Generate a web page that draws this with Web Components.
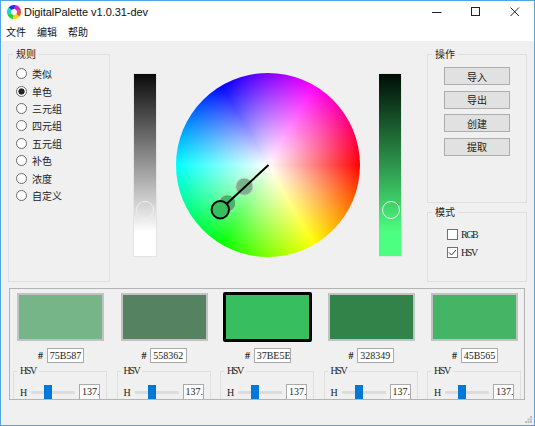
<!DOCTYPE html>
<html lang="zh">
<head>
<meta charset="utf-8">
<title>DigitalPalette</title>
<style>
  html, body { margin: 0; height: 100%; background: #f0f0f0; }
  body { font: 10px "Noto Sans CJK SC", "Noto Sans", sans-serif; color: #222; }
</style>
</head>
<body>
<dp-window>
  <dp-rules slot="left"></dp-rules>
  <dp-stage slot="mid"></dp-stage>
  <dp-side slot="right"></dp-side>
  <dp-palette slot="bottom"></dp-palette>
</dp-window>

<script>
const CJK = '"Noto Sans CJK SC", "Noto Sans", sans-serif';
const LATIN = '"Liberation Serif", "Noto Sans CJK SC", serif';

class DpWindow extends HTMLElement {
  constructor() {
    super();
    this.attachShadow({ mode: 'open' });
    this.shadowRoot.innerHTML = `
      <style>
        :host {
          display: flex;
          flex-direction: column;
          position: relative;
          box-sizing: border-box;
          width: 535px;
          height: 426px;
          border: 1px solid #4fa6e3;
          background: #f0f0f0;
        }
        #title {
          display: flex;
          align-items: center;
          height: 21px;
          background: #fff;
          font: 11px "Liberation Sans", sans-serif;
          letter-spacing: -.05px;
          color: #111;
        }
        #title svg.logo { margin: 0 3px 0 6px; flex: none; }
        #title span { flex: 1; }
        .ctl { width: 39px; height: 21px; display: flex; align-items: center; justify-content: center; }
        #menu {
          display: flex;
          gap: 11px;
          height: 19px;
          padding-left: 5px;
          align-items: center;
          background: #fff;
          font: 10px ${CJK};
          color: #111;
        }
        #top {
          display: grid;
          grid-template-columns: 102px 317px 100px;
          height: 236px;
          padding: 5px 0 0 7px;
        }
        #bottom {
          padding: 6px 0 0 8px;
        }
        #grip {
          position: absolute;
          right: 1px;
          bottom: 1px;
        }
      </style>
      <div id="title">
        <svg class="logo" width="14" height="14" viewBox="0 0 14 14">
          <circle cx="7" cy="7" r="5" fill="none" stroke="#e53" stroke-width="4" stroke-dasharray="5.2 26" transform="rotate(-20 7 7)"/>
          <circle cx="7" cy="7" r="5" fill="none" stroke="#f4d90f" stroke-width="4" stroke-dasharray="5.2 26" transform="rotate(40 7 7)"/>
          <circle cx="7" cy="7" r="5" fill="none" stroke="#2bd62b" stroke-width="4" stroke-dasharray="5.2 26" transform="rotate(100 7 7)"/>
          <circle cx="7" cy="7" r="5" fill="none" stroke="#16d5d5" stroke-width="4" stroke-dasharray="5.2 26" transform="rotate(160 7 7)"/>
          <circle cx="7" cy="7" r="5" fill="none" stroke="#2230e0" stroke-width="4" stroke-dasharray="5.2 26" transform="rotate(220 7 7)"/>
          <circle cx="7" cy="7" r="5" fill="none" stroke="#d41fd4" stroke-width="4" stroke-dasharray="5.2 26" transform="rotate(280 7 7)"/>
        </svg>
        <span>DigitalPalette v1.0.31-dev</span>
        <div class="ctl"><svg width="10" height="10"><path d="M0 5.5H9.5" stroke="#222"/></svg></div>
        <div class="ctl"><svg width="10" height="10"><rect x=".5" y=".5" width="8" height="8" fill="none" stroke="#222"/></svg></div>
        <div class="ctl"><svg width="10" height="10"><path d="M.5 .5L9 9M9 .5L.5 9" stroke="#222"/></svg></div>
      </div>
      <div id="menu"><span>文件</span><span>编辑</span><span>帮助</span></div>
      <div id="top">
        <slot name="left"></slot>
        <slot name="mid"></slot>
        <slot name="right"></slot>
      </div>
      <div id="bottom"><slot name="bottom"></slot></div>
      <svg id="grip" width="8" height="8" viewBox="0 0 8 8" fill="#bdbdbd">
        <rect x="5" y="0" width="2" height="2"/>
        <rect x="2.5" y="2.5" width="2" height="2"/><rect x="5" y="2.5" width="2" height="2"/>
        <rect x="0" y="5" width="2" height="2"/><rect x="2.5" y="5" width="2" height="2"/><rect x="5" y="5" width="2" height="2"/>
      </svg>
    `;
  }
}

class DpGroup extends HTMLElement {
  constructor() {
    super();
    this.attachShadow({ mode: 'open' });
    this.shadowRoot.innerHTML = `
      <style>
        :host { display: block; box-sizing: border-box; }
        fieldset {
          box-sizing: border-box;
          height: 100%;
          margin: 0;
          padding: 0;
          border: 1px solid #dfdfdf;
          min-width: 0;
        }
        legend {
          padding: 0 3px;
          margin-left: var(--legend-x, 4px);
          font: var(--legend-font, 10px/16px ${CJK});
          letter-spacing: var(--legend-spacing, 0);
          color: #222;
        }
        #body { padding: var(--group-pad, 0); }
      </style>
      <fieldset><legend></legend><div id="body"><slot></slot></div></fieldset>
    `;
  }
  connectedCallback() {
    this.shadowRoot.querySelector('legend').textContent = this.getAttribute('label');
  }
}

class DpRadio extends HTMLElement {
  constructor() {
    super();
    this.attachShadow({ mode: 'open' });
    this.shadowRoot.innerHTML = `
      <style>
        :host { display: flex; align-items: center; gap: 5px; height: 17.4px; font: 10px ${CJK}; color: #222; }
        i {
          box-sizing: border-box;
          width: 11px;
          height: 11px;
          border: 1px solid #6a6a6a;
          border-radius: 50%;
          background: #fff;
          display: block;
          flex: none;
        }
        :host([checked]) i { background: radial-gradient(circle, #222 0 2.8px, #fff 3.4px); }
      </style>
      <i></i><slot></slot>
    `;
  }
}

class DpRules extends HTMLElement {
  constructor() {
    super();
    this.attachShadow({ mode: 'open' });
    this.shadowRoot.innerHTML = `
      <style>
        :host { display: block; height: 100%; }
        dp-group { height: 100%; --group-pad: 3px 0 0 7px; }
      </style>
      <dp-group label="规则">
        <dp-radio>类似</dp-radio>
        <dp-radio checked>单色</dp-radio>
        <dp-radio>三元组</dp-radio>
        <dp-radio>四元组</dp-radio>
        <dp-radio>五元组</dp-radio>
        <dp-radio>补色</dp-radio>
        <dp-radio>浓度</dp-radio>
        <dp-radio>自定义</dp-radio>
      </dp-group>
    `;
  }
}

class DpStrip extends HTMLElement {
  constructor() {
    super();
    this.attachShadow({ mode: 'open' });
    this.shadowRoot.innerHTML = `
      <style>
        :host {
          display: block;
          position: relative;
          box-sizing: border-box;
          flex: none;
          width: 24px;
          height: 184px;
          border: 1px solid #e4e4e4;
          background: var(--strip);
          background-clip: padding-box;
        }
        i {
          position: absolute;
          left: var(--knob-left, 2px);
          top: 127px;
          box-sizing: border-box;
          width: 18px;
          height: 18px;
          border: 1px solid #eee;
          border-radius: 50%;
        }
      </style>
      <i></i>
    `;
  }
}

class DpWheel extends HTMLElement {
  constructor() {
    super();
    this.attachShadow({ mode: 'open' });
    this.shadowRoot.innerHTML = `
      <style>
        :host { display: block; position: relative; flex: none; width: 184px; height: 184px; }
        #disc {
          width: 184px;
          height: 184px;
          border-radius: 50%;
          background:
            radial-gradient(circle closest-side, #fff 0, rgba(255,255,255,0) 100%),
            conic-gradient(from 90deg, #f00, #ff0, #0f0, #0ff, #00f, #f0f, #f00);
        }
        svg { position: absolute; left: 0; top: 0; }
      </style>
      <div id="disc"></div>
      <svg width="184" height="184" viewBox="176 74 184 184">
        <circle cx="227.3" cy="204.3" r="8.5" fill="#45B565" stroke="#c8c8c8"/>
        <circle cx="244.3" cy="187.7" r="8.5" fill="#75B587" stroke="#c8c8c8"/>
        <path d="M268.5 166L220.3 210.7" stroke="#000" stroke-width="2"/>
        <circle cx="220.3" cy="210.7" r="8.7" fill="#37BE5E" stroke="#000" stroke-width="2"/>
      </svg>
    `;
  }
}

class DpStage extends HTMLElement {
  constructor() {
    super();
    this.attachShadow({ mode: 'open' });
    this.shadowRoot.innerHTML = `
      <style>
        :host {
          display: flex;
          justify-content: space-between;
          align-items: flex-start;
          padding: 27px 25px 0 23px;
          height: 100%;
          box-sizing: border-box;
        }
        #v { --strip: linear-gradient(#0a0a0a, #fff 87%); }
        #s {
          --strip: linear-gradient(#000d05, #2f9a4f 52%, #4dff80 87%);
          --knob-left: 2.5px;
          width: 23px;
          border-left: 0;
        }
      </style>
      <dp-strip id="v"></dp-strip>
      <dp-wheel></dp-wheel>
      <dp-strip id="s"></dp-strip>
    `;
  }
}

class DpButton extends HTMLElement {
  constructor() {
    super();
    this.attachShadow({ mode: 'open' });
    this.shadowRoot.innerHTML = `
      <style>
        :host {
          display: flex;
          align-items: center;
          justify-content: center;
          box-sizing: border-box;
          width: 66px;
          height: 18px;
          background: #e1e1e1;
          border: 1px solid #adadad;
          font: 10px ${CJK};
          color: #222;
        }
      </style>
      <slot></slot>
    `;
  }
}

class DpCheck extends HTMLElement {
  constructor() {
    super();
    this.attachShadow({ mode: 'open' });
    this.shadowRoot.innerHTML = `
      <style>
        :host {
          display: flex;
          align-items: center;
          gap: 3px;
          height: 18px;
          font: 10px ${LATIN};
          letter-spacing: -1.4px;
          color: #222;
        }
        svg { flex: none; }
      </style>
      <svg width="11" height="11" viewBox="0 0 11 11">
        <rect x=".5" y=".5" width="10" height="10" fill="#fff" stroke="#707070"/>
        <path id="tick" d="M2 5.5l2.5 2.5 4.5-5" fill="none" stroke="#333"/>
      </svg>
      <slot></slot>
    `;
  }
  connectedCallback() {
    if (!this.hasAttribute('checked')) this.shadowRoot.getElementById('tick').remove();
  }
}

class DpSide extends HTMLElement {
  constructor() {
    super();
    this.attachShadow({ mode: 'open' });
    this.shadowRoot.innerHTML = `
      <style>
        :host { display: flex; flex-direction: column; gap: 1px; height: 100%; }
        #ops { height: 157px; --group-pad: 5px 0 0 16px; }
        #ops div { display: flex; flex-direction: column; gap: 5.5px; }
        #mode { height: 78px; --group-pad: 5px 0 0 19px; }
      </style>
      <dp-group id="ops" label="操作">
        <div>
          <dp-button>导入</dp-button>
          <dp-button>导出</dp-button>
          <dp-button>创建</dp-button>
          <dp-button>提取</dp-button>
        </div>
      </dp-group>
      <dp-group id="mode" label="模式">
        <dp-check>RGB</dp-check>
        <dp-check checked>HSV</dp-check>
      </dp-group>
    `;
  }
}

class DpCell extends HTMLElement {
  constructor() {
    super();
    this.attachShadow({ mode: 'open' });
    this.shadowRoot.innerHTML = `
      <style>
        :host {
          display: flex;
          flex-direction: column;
          flex: none;
          width: 103.5px;
          box-sizing: border-box;
          padding: 4px 6.5px 0 3px;
          font: 10px ${LATIN};
          color: #222;
          --legend-font: 10px/14px ${LATIN};
          --legend-x: 3px;
          --legend-spacing: -1.4px;
        }
        :host > * { flex: none; }
        #swatch {
          box-sizing: border-box;
          width: 87px;
          height: 48px;
          margin-left: 1px;
          border: 2px solid #c2c2c2;
          background: var(--c);
        }
        :host([active]) #swatch {
          width: 89px;
          height: 50px;
          margin: -1px 0;
          border: 3px solid #000;
          border-radius: 2px;
        }
        #hex {
          display: flex;
          align-items: center;
          gap: 3.7px;
          height: 16px;
          margin: 6px 0 0 22px;
        }
        #hex b { font-weight: bold; }
        .field {
          box-sizing: border-box;
          height: 15px;
          border: 1px solid #aaa;
          background: #fff;
          padding-left: 2px;
          line-height: 13px;
          overflow: hidden;
        }
        #hex .field { width: 37px; }
        dp-group {
          margin: 1px 0 0 -3px;
          width: 94px;
          height: 60px;
          --group-pad: 6px 0 0 6px;
        }
        #h { display: flex; align-items: center; height: 16px; }
        #h span { width: 5.5px; flex: none; margin-right: 5.5px; }
        #track {
          position: relative;
          flex: none;
          width: 44px;
          height: 3px;
          margin-right: 4px;
          background: #dcdcdc;
          border-radius: 1px;
        }
        #track i {
          position: absolute;
          left: 13px;
          top: -6px;
          width: 8px;
          height: 16px;
          background: #0078d7;
        }
        #h .field { flex: none; width: 21px; height: 16px; white-space: nowrap; }
      </style>
      <div id="swatch"></div>
      <div id="hex"><b>#</b><div class="field"></div></div>
      <dp-group label="HSV">
        <div id="h">
          <span>H</span>
          <div id="track"><i></i></div>
          <div class="field">137.</div>
        </div>
      </dp-group>
    `;
  }
  connectedCallback() {
    const hex = this.getAttribute('hex');
    this.style.setProperty('--c', '#' + hex);
    this.shadowRoot.querySelector('#hex .field').textContent = hex;
  }
}

class DpPalette extends HTMLElement {
  constructor() {
    super();
    this.attachShadow({ mode: 'open' });
    this.shadowRoot.innerHTML = `
      <style>
        :host {
          display: flex;
          box-sizing: border-box;
          width: 516px;
          height: 112px;
          padding-left: 3px;
          border: 1px solid #b4b4b4;
          overflow: hidden;
        }
      </style>
      <dp-cell hex="75B587"></dp-cell>
      <dp-cell hex="558362"></dp-cell>
      <dp-cell hex="37BE5E" active></dp-cell>
      <dp-cell hex="328349"></dp-cell>
      <dp-cell hex="45B565"></dp-cell>
    `;
  }
}

customElements.define('dp-window', DpWindow);
customElements.define('dp-group', DpGroup);
customElements.define('dp-radio', DpRadio);
customElements.define('dp-rules', DpRules);
customElements.define('dp-strip', DpStrip);
customElements.define('dp-wheel', DpWheel);
customElements.define('dp-stage', DpStage);
customElements.define('dp-button', DpButton);
customElements.define('dp-check', DpCheck);
customElements.define('dp-side', DpSide);
customElements.define('dp-cell', DpCell);
customElements.define('dp-palette', DpPalette);
</script>
</body>
</html>
